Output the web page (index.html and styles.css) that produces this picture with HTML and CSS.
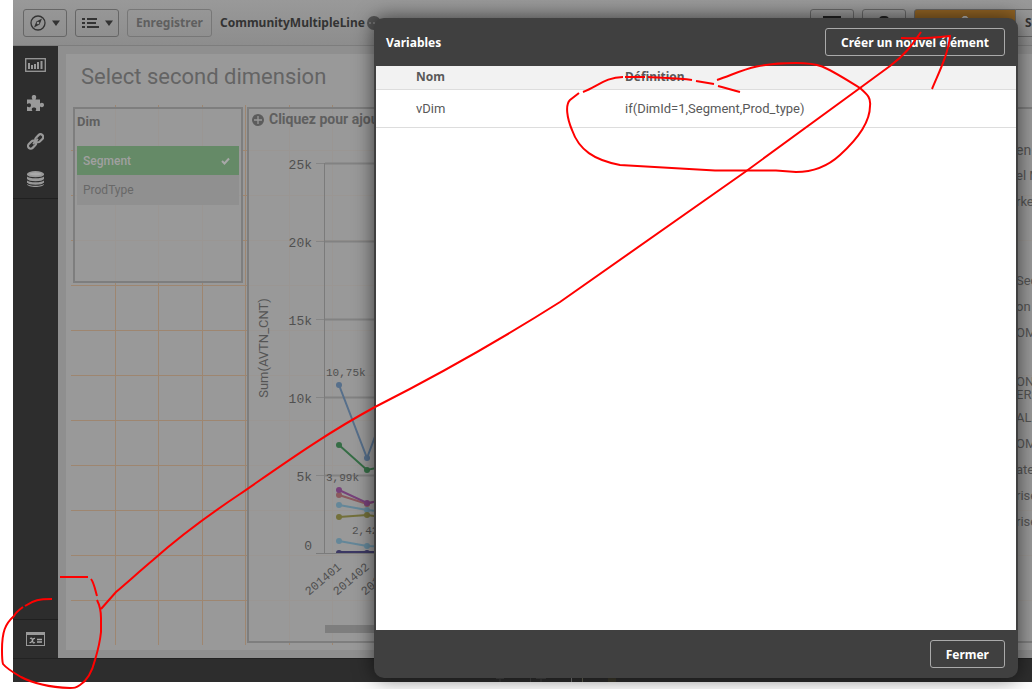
FILE: index.html
```html
<!DOCTYPE html>
<html lang="fr">
<head>
<meta charset="utf-8">
<title>Variables</title>
<link rel="stylesheet" href="styles.css">
</head>
<body>
<div class="app">
  <header class="toolbar">
    <button class="tool" type="button" aria-label="Navigation">
      <svg width="16" height="16" viewBox="0 0 16 16"><circle cx="8" cy="8" r="7" fill="none" stroke="#333" stroke-width="1.3"/><path d="M12 3.6 9.6 9.6 4 12.4 6.4 6.4Z" fill="#333"/><circle cx="8" cy="8" r="1.3" fill="#949494"/></svg>
      <svg width="8" height="6" viewBox="0 0 8 6"><path d="M0 .5h8L4 6z" fill="#333"/></svg>
    </button>
    <button class="tool" type="button" aria-label="Menu">
      <svg width="17" height="12" viewBox="0 0 17 12"><path d="M0 2h3M0 6h3M0 10h3M5 2h10M5 6h9M5 10h12" stroke="#333" stroke-width="2"/></svg>
      <svg width="8" height="6" viewBox="0 0 8 6"><path d="M0 .5h8L4 6z" fill="#333"/></svg>
    </button>
    <button class="tool save" type="button" disabled>Enregistrer</button>
    <span class="app-name">CommunityMultipleLine</span>
    <svg class="more" width="14" height="14" viewBox="0 0 14 14"><circle cx="7" cy="7" r="7" fill="#555"/><path d="M2 7h2M6 7h2M10 7h2" stroke="#999" stroke-width="1"/></svg>
    <div class="tools-right">
      <button class="tool" type="button" aria-label="Présentation"><svg width="18" height="14" viewBox="0 0 18 14"><rect x="1" y="1" width="16" height="12" fill="none" stroke="#222" stroke-width="2"/></svg></button>
      <button class="tool" type="button" aria-label="Favoris"><svg width="12" height="14" viewBox="0 0 12 14"><rect x="1" width="10" height="14" rx="4" fill="#222"/></svg></button>
      <button class="tool done" type="button" aria-label="Terminé"><svg width="10" height="14" viewBox="0 0 10 14"><path d="M0 5 5 0l5 5" fill="none" stroke="#bbb" stroke-width="2"/></svg></button>
      <span class="sheet-name">S</span>
    </div>
  </header>

  <div class="workspace">
    <nav class="sidebar">
      <div class="side-group">
        <button class="side" type="button" aria-label="Graphiques"><svg width="21" height="14" viewBox="0 0 21 14"><rect x=".7" y=".7" width="19.6" height="12.6" fill="none" stroke="#999" stroke-width="1.3"/><path d="M4 11V5M7 11V7M10 11V6M13 11V4M16.500 11V3" stroke="#999" stroke-width="2"/></svg></button>
        <button class="side" type="button" aria-label="Extensions"><svg width="17" height="17" viewBox="0 0 17 17"><path d="M0 4.500h5.500C4 2 5 0 7 0s3 2 1.500 4.500H13V8.500C15 7 17 8 17 10s-2 3-4 1.500V16H8.500C10 14 9 12.500 7 12.500S4 14 5.500 16H0V11.500C2.500 13 4 12 4 10.200S2.500 7.500 0 9z" fill="#999"/></svg></button>
        <button class="side" type="button" aria-label="Éléments principaux"><svg width="17" height="17" viewBox="0 0 17 17"><g fill="none" stroke="#999" stroke-width="2.200"><rect x="7.700" y="2.600" width="9" height="5.400" rx="2.700" transform="rotate(-45 12.200 5.300)"/><rect x=".5" y="9" width="9" height="5.400" rx="2.700" transform="rotate(-45 5 11.700)"/></g><path d="m6 11 5-5" stroke="#999" stroke-width="1.800"/></svg></button>
        <button class="side" type="button" aria-label="Champs"><svg width="17" height="16" viewBox="0 0 17 16"><path d="M0 3v10c0 4 17 4 17 0V3z" fill="#999"/><ellipse cx="8.500" cy="3" rx="8.500" ry="3" fill="#999"/><ellipse cx="8.500" cy="3" rx="6" ry="1.400" fill="#aaa"/><path d="M0 4.500c1 3 16 3 17 0M0 8.500c1 3 16 3 17 0M0 12c1 3 16 3 17 0" fill="none" stroke="#2d2d2d" stroke-width="1.200"/></svg></button>
      </div>
      <div class="side-foot">
        <button class="side" type="button" aria-label="Variables"><svg width="19" height="14" viewBox="0 0 19 14"><rect x=".5" y=".5" width="18" height="13" fill="none" stroke="#999"/><path d="M0 0h19v3H0z" fill="#999"/><path d="M4 6.500c2-1 2 0 2.500 2s.5 3 2.500 2M9 6.500c-2-.5-2 1-2.500 2S5 11 3.500 10.500M11 7.500h5M11 10h5" fill="none" stroke="#aaa" stroke-width="1.300"/></svg></button>
      </div>
    </nav>

    <main class="stage">
      <div class="sheet">
        <svg class="grid" width="966" height="596"><path d="M5 96.500H966M5 141.500H966M5 186.500H966M5 231.500H966M5 276.500H966M5 321.500H966M5 366.500H966M5 411.500H966M5 456.500H966M5 501.500H966M5 546.500H966M49.500 51V591M92.500 51V591M136.500 51V591M179.500 51V591M223.500 51V591M266.500 51V591M310.500 51V591" stroke="#9e8670"/></svg>
        <h1>Select second dimension</h1>
        <div class="cards">
          <section class="card filter">
            <h2>Dim</h2>
            <ul>
              <li class="on">Segment <svg width="9" height="8" viewBox="0 0 9 8"><path d="m1 4 2.500 2.500L8 1.500" fill="none" stroke="#a8a8a8" stroke-width="2"/></svg></li>
              <li>ProdType</li>
            </ul>
          </section>
          <section class="card chart">
            <div class="plot">
              <h2><svg width="12" height="12" viewBox="0 0 12 12"><circle cx="6" cy="6" r="6" fill="#5c5c5c"/><path d="M6 2v8M2 6h8" stroke="#999" stroke-width="1.300"/></svg>Cliquez pour ajouter</h2>
              <svg class="lines" width="240" height="510" viewBox="249 130 240 510">
                <path d="M316 163.500H490M316 241.500H490M316 319.500H490M316 397.500H490M316 475.500H490" stroke="#858585" stroke-width="1"/>
                <path d="M325 163.500H490M325 241.500H490M325 319.500H490M325 397.500H490M325 475.500H490" stroke="#828282" stroke-width="2"/>
                <path d="M324.500 163V553M316 553.500H490" stroke="#7b7b7b" fill="none"/>
                <g class="ticks" text-anchor="end"><text x="312" y="169">25k</text><text x="312" y="247">20k</text><text x="312" y="325">15k</text><text x="312" y="403">10k</text><text x="312" y="481">5k</text><text x="312" y="550">0</text></g>
                <text class="axis" text-anchor="middle" transform="translate(268 348) rotate(-90)">Sum(AVTN_CNT)</text>
                <g fill="none" stroke-width="2">
                  <path d="m339 385 28 73 28-75" stroke="#566f8b"/><path d="m339 445 28 25 28-6" stroke="#356d45"/>
                  <path d="m339 495 28 9 28-9" stroke="#8b595d"/><path d="m339 490 28 13 28-4" stroke="#77417a"/>
                  <path d="m339 505 28 5 28 3" stroke="#648799"/><path d="m339 517 28-2 28 4" stroke="#73703a"/>
                  <path d="m339 541 28 5 28 1" stroke="#648799"/><path d="M339 552h56" stroke="#3c3863"/>
                </g>
                <g fill="#566f8b"><circle cx="339" cy="385" r="3"/><circle cx="367" cy="458" r="3"/></g>
                <g fill="#356d45"><circle cx="339" cy="445" r="3"/><circle cx="367" cy="470" r="3"/></g>
                <g fill="#8b595d"><circle cx="339" cy="495" r="3"/><circle cx="367" cy="504" r="3"/></g>
                <g fill="#77417a"><circle cx="339" cy="490" r="3"/><circle cx="367" cy="503" r="3"/></g>
                <g fill="#648799"><circle cx="339" cy="505" r="3"/><circle cx="367" cy="510" r="3"/><circle cx="339" cy="541" r="3"/><circle cx="367" cy="546" r="3"/></g>
                <g fill="#73703a"><circle cx="339" cy="517" r="3"/><circle cx="367" cy="515" r="3"/></g>
                <g fill="#3c3863"><path d="M336 553a3 3 0 0 1 6 0zM364 553a3 3 0 0 1 6 0z"/></g>
                <g class="values"><text x="326" y="376">10,75k</text><text x="326" y="481">3,99k</text><text x="352" y="534">2,42k</text></g>
                <g class="months" text-anchor="end"><text transform="translate(342 568) rotate(-40)">201401</text><text transform="translate(370 568) rotate(-40)">201402</text><text transform="translate(398 568) rotate(-40)">201403</text></g>
                <path d="M325 625H490V633H325z" fill="#7e7e7e"/>
              </svg>
            </div>
            <ul class="legend">
              <li class="head">en</li><li>el M</li><li class="end">rke</li>
              <li>Sec</li><li>on</li><li class="gap">OM</li>
              <li class="tight">ON</li><li class="tight last">ERN</li><li>ALL</li><li>OM</li><li>ate</li><li>rise</li><li>rise</li>
            </ul>
          </section>
        </div>
      </div>
    </main>
  </div>
  <footer class="statusbar">
    <svg width="120" height="4" viewBox="0 0 120 4"><path d="M0 .5h8M4 4V1M40 .5h10M45 4V1M34.500 0v4" fill="none" stroke="#444"/><path d="M75.500 0v4" stroke="#777"/><path d="M86.500 0v4" stroke="#665"/><path d="M112 0h8v4h-8z" fill="#3b392c"/></svg>
  </footer>
</div>

<div class="dialog" role="dialog" aria-labelledby="dialog-title">
  <header class="dialog-bar">
    <h2 id="dialog-title">Variables</h2>
    <button class="action" type="button">Créer un nouvel élément</button>
  </header>
  <div class="dialog-body">
    <table>
      <thead><tr><th>Nom</th><th>Définition</th></tr></thead>
      <tbody><tr><td>vDim</td><td>if(DimId=1,Segment,Prod_type)</td></tr></tbody>
    </table>
  </div>
  <footer class="dialog-bar foot"><button class="action" type="button">Fermer</button></footer>
</div>

<svg class="ink" width="1032" height="689" viewBox="0 0 1032 689" aria-hidden="true">
  <path d="M60 577H88M91 579C94 583 95 589 97 596M97 600C99 604 101 609 101 618V632C100 642 98 650 95 660C92 672 88 680 80 685C76 688 74 688 70 688C48 687 34 684 21 677C14 673 7 669 3 664C2 661 2 656 2 650C2 632 5 624 14 616C16 612 19 610 23 607M25 606C34 600 39 599 52 599"/>
  <path d="M101 609 116 592C130 580 140 571 153 560C180 536 210 514 240 494C282 465 325 434 375 407C440 374 500 340 560 302L745 172 860 88 890 66C905 55 912 45 921 32M901 38C917 39 933 38 950 36C948 55 939 72 932 89"/>
  <path d="M583 92C598 86 606 77 623 77M625 77H645M648 77C664 78 678 78 692 80M696 81 714 84M718 86C726 88 732 90 740 92M717 80C741 72 752 63 796 63C821 63 824 66 860 88C868 95 871 98 870 106C870 125 851 145 840 155C828 166 815 172 796 172L776 170.500H715L620 165C594 160 579 150 572 130C567 118 565 105 570 100L579 93"/>
</svg>
</body>
</html>
```
FILE: styles.css
```css
* { box-sizing: border-box; }
body { margin: 0; min-height: 100vh; background: #fff; font-family: Roboto, "Open Sans", sans-serif; font-size: 13px; overflow: hidden; position: relative; }
h1, h2, ul { margin: 0; padding: 0; list-style: none; }
button { font: inherit; padding: 0; }

.app { margin-left: 13px; display: flex; flex-direction: column; overflow: hidden; }
.toolbar { height: 46px; display: flex; align-items: center; gap: 8px; padding-left: 10px; background: linear-gradient(#999, #8d8d8d); border-bottom: 1px solid #7d7d7d; }
.tool { width: 44px; height: 28px; display: flex; align-items: center; justify-content: center; gap: 6px; border: 1px solid #666; border-radius: 3px; background: none; flex: none; }
.save { width: 85px; border-color: #777; color: #5f5f5f; }
.save, .app-name, .sheet-name { font-family: "Noto Sans", sans-serif; font-size: 12px; font-weight: 700; }
.app-name, .sheet-name { color: #333; }
.more { margin-left: -6px; }
.tools-right { display: flex; gap: 8px; margin-left: auto; }
.done { width: 102px; background: #8f6224; border-radius: 3px 0 0 3px; }
.sheet-name { width: 16px; margin-left: -8px; padding-left: 9px; line-height: 26px; border: 1px solid #666; border-width: 1px 0; }

.workspace { display: flex; height: 612px; }
.sidebar { width: 45px; flex: none; background: #2d2d2d; display: flex; flex-direction: column; justify-content: space-between; }
.side { width: 45px; height: 38px; border: 0; background: none; display: flex; align-items: center; justify-content: center; }
.side-group { border-bottom: 1px solid #202020; }
.side-foot { border-top: 1px solid #202020; }
.stage { flex: 1; min-width: 0; background: #8f8f8f; padding: 8px 0 8px 8px; }
.sheet { position: relative; height: 100%; background: #999; overflow: hidden; display: flex; flex-direction: column; }
.grid { position: absolute; left: 0; top: 0; }
h1 { position: relative; height: 53px; padding: 9px 15px; font-size: 22px; line-height: 28px; font-weight: 400; color: #646464; }
.cards { position: relative; display: flex; gap: 4px; margin-left: 7px; height: 536px; align-items: flex-start; }
.card { border: 2px solid #7e7e7e; background: rgba(153, 153, 153, .85); }
.card h2 { font-size: 13px; line-height: 18px; color: #5f5f5f; }
.filter { width: 170px; height: 176px; padding: 4px 2px; flex: none; font-size: 12px; }
.filter ul { margin-top: 15px; }
.filter li { display: flex; align-items: center; justify-content: space-between; height: 30px; padding: 0 9px 0 6px; background: #909090; color: #686868; }
.filter .on { height: 29px; background: #658a67; color: #a0a0a0; font-weight: 500; }
.chart { flex: 1; min-width: 0; height: 100%; display: flex; justify-content: space-between; border-right: 0; }
.plot { width: 240px; overflow: hidden; }
.plot h2 { display: flex; align-items: center; gap: 5px; padding-left: 3px; font-size: 14px; line-height: 21px; white-space: nowrap; }
.lines { display: block; }
.ticks text, .values text, .months text { font-family: "Liberation Mono", monospace; fill: #505050; }
.ticks text { font-size: 13px; }
.values text { font-size: 11px; }
.months text { font-size: 12px; }
.axis { font-size: 13px; fill: #555; }
.legend { width: 16px; padding-top: 28px; color: #555; line-height: 26px; white-space: nowrap; }
.legend .head { font-size: 14px; }
.legend .end { margin-bottom: 53px; }
.legend .gap { margin-bottom: 29px; }
.legend .tight { line-height: 13px; }
.legend .last { margin-bottom: 4px; }
.statusbar { height: 24px; background: #2d2d2d; border-top: 1px solid #222; display: flex; align-items: flex-end; padding-left: 483px; }

.dialog { position: absolute; left: 374px; right: 14px; top: 18px; height: 660px; display: flex; flex-direction: column; padding: 0 2px; background: #404040; border-radius: 10px; box-shadow: 0 0 20px rgba(0, 0, 0, .6); }
.dialog-bar { height: 48px; flex: none; display: flex; align-items: center; justify-content: space-between; padding: 0 11px 0 10px; color: #fff; font-family: "Noto Sans", sans-serif; font-size: 12px; font-weight: 700; }
.dialog-bar h2 { font-size: 12px; }
.foot { justify-content: flex-end; }
.action { height: 28px; padding: 0 15px; border: 1px solid #aaa; border-radius: 3px; background: none; color: #fff; }
.dialog-body { flex: 1; background: #fff; }
table { width: 100%; border-collapse: collapse; table-layout: fixed; color: #595959; text-align: left; }
th, td { padding: 0 0 0 40px; border-bottom: 1px solid #ddd; }
th { height: 23px; line-height: 16px; background: #f2f2f2; font-family: "Noto Sans", sans-serif; font-size: 12px; }
td { height: 38px; }
th:first-child { width: 209px; }
.ink { position: absolute; left: 0; top: 0; fill: none; stroke: #f00; stroke-width: 2; pointer-events: none; }
```
